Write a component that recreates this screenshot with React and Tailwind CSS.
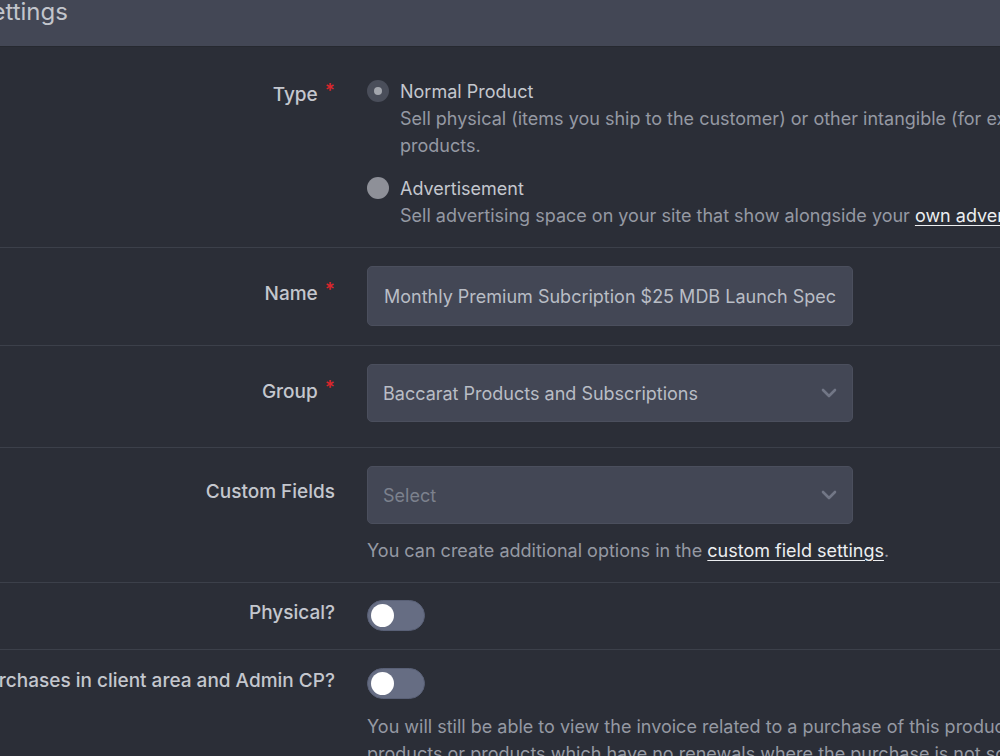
import React, { useState } from 'react';

const Required = () => <span className="ml-[7px] text-[#d9262c] text-[19px] font-semibold relative top-[-4px]">*</span>;

const Chevron = () => (
  <svg width="16" height="10" viewBox="0 0 16 10" className="absolute right-[15px] top-1/2 -translate-y-1/2">
    <path d="M2 2l6 6 6-6" fill="none" stroke="#727786" strokeWidth="2.6" strokeLinecap="round" strokeLinejoin="round" />
  </svg>
);

const Toggle = ({ on, onChange }) => (
  <button
    type="button"
    onClick={() => onChange(!on)}
    className="w-[58px] h-[31px] rounded-full bg-[#666d83] border border-[#596076] flex items-center px-[3px]"
  >
    <span className={`w-[23px] h-[23px] rounded-full bg-white ${on ? 'ml-auto' : ''}`} />
  </button>
);

// label column pads from the row top, control column carries the row's own padding
const Row = ({ label, required, labelPad, children, pad }) => (
  <div className="flex items-start border-b border-[#3c404a]">
    <div className={`w-[335px] shrink-0 flex justify-end ${labelPad}`}>
      <div className="whitespace-nowrap text-[19px] leading-[27px] font-medium text-[#c4c7ce]">
        {label}
        {required && <Required />}
      </div>
    </div>
    <div className={`ml-[32px] w-[760px] shrink-0 ${pad}`}>{children}</div>
  </div>
);

export default function App() {
  const [type, setType] = useState('normal');
  const [physical, setPhysical] = useState(false);
  const [showPurchases, setShowPurchases] = useState(false);

  return (
    <div className="w-[1000px] h-[756px] overflow-hidden bg-[#2b2e37]" style={{ fontFamily: 'Inter, "Noto Sans", sans-serif' }}>
      <div className="h-[47px] bg-[#434755] border-b border-[#262930] overflow-hidden">
        <div className="relative top-[-5px] ml-[-24px] text-[24px] leading-[34px] text-[#c2c5cc]">Settings</div>
      </div>

      <Row label="Type" required labelPad="pt-[34px]" pad="pt-[31px] pb-[18px]">
        <div className="flex gap-[11px] cursor-pointer" onClick={() => setType('normal')}>
          <span className="mt-[2px] w-[22px] h-[22px] rounded-full bg-[#4a4e5a] flex items-center justify-center shrink-0">
            {type === 'normal' && <span className="w-[8px] h-[8px] rounded-full bg-[#a3a6ad]" />}
          </span>
          <div className="text-[18px] leading-[27px] whitespace-nowrap">
            <div className="text-[#c4c7ce]">Normal Product</div>
            <div className="text-[#9599a3]">Sell physical (items you ship to the customer) or other intangible (for example, software or licenses)</div>
            <div className="text-[#9599a3]">products.</div>
          </div>
        </div>
        <div className="flex gap-[11px] mt-[16px] cursor-pointer" onClick={() => setType('ad')}>
          <span className="mt-[2px] w-[22px] h-[22px] rounded-full bg-[#8e9098] flex items-center justify-center shrink-0">
            {type === 'ad' && <span className="w-[8px] h-[8px] rounded-full bg-[#4a4e5a]" />}
          </span>
          <div className="text-[18px] leading-[27px] whitespace-nowrap">
            <div className="text-[#c4c7ce]">Advertisement</div>
            <div className="text-[#9599a3]">
              Sell advertising space on your site that show alongside your{' '}
              <a href="#" className="text-[#eceef1] underline underline-offset-[3px]">own advertisements</a>.
            </div>
          </div>
        </div>
      </Row>

      <Row label="Name" required labelPad="pt-[32px]" pad="pt-[18px] pb-[19px]">
        <input
          readOnly
          defaultValue="Monthly Premium Subcription $25 MDB Launch Special"
          className="w-[486px] h-[60px] rounded-[5px] bg-[#434755] border border-[#4b4f5d] px-[16px] text-[18px] text-[#b9bdc5] outline-none"
        />
      </Row>

      <Row label="Group" required labelPad="pt-[32px]" pad="pt-[18px] pb-[25px]">
        <div className="relative w-[486px] h-[58px] rounded-[5px] bg-[#434755] border border-[#4b4f5d] px-[15px] flex items-center text-[18px] text-[#b9bdc5]">
          Baccarat Products and Subscriptions
          <Chevron />
        </div>
      </Row>

      <Row label="Custom Fields" labelPad="pt-[30px]" pad="pt-[18px] pb-[18px]">
        <div className="relative w-[486px] h-[58px] rounded-[5px] bg-[#434755] border border-[#4b4f5d] px-[15px] flex items-center text-[18px] text-[#7c818d]">
          Select
          <Chevron />
        </div>
        <div className="mt-[13px] text-[18px] leading-[27px] text-[#9599a3] whitespace-nowrap">
          You can create additional options in the{' '}
          <a href="#" className="text-[#eceef1] underline underline-offset-[3px]">custom field settings</a>.
        </div>
      </Row>

      <Row label="Physical?" labelPad="pt-[16px]" pad="pt-[17px] pb-[18px]">
        <Toggle on={physical} onChange={setPhysical} />
      </Row>

      <Row label="Show purchases in client area and Admin CP?" labelPad="pt-[17px]" pad="pt-[18px] pb-[18px]">
        <Toggle on={showPurchases} onChange={setShowPurchases} />
        <div className="mt-[14px] text-[18px] leading-[27px] text-[#9599a3] whitespace-nowrap">
          <div>You will still be able to view the invoice related to a purchase of this product. This is useful for free</div>
          <div>products or products which have no renewals where the purchase is not something the customer needs to see.</div>
        </div>
      </Row>
    </div>
  );
}
